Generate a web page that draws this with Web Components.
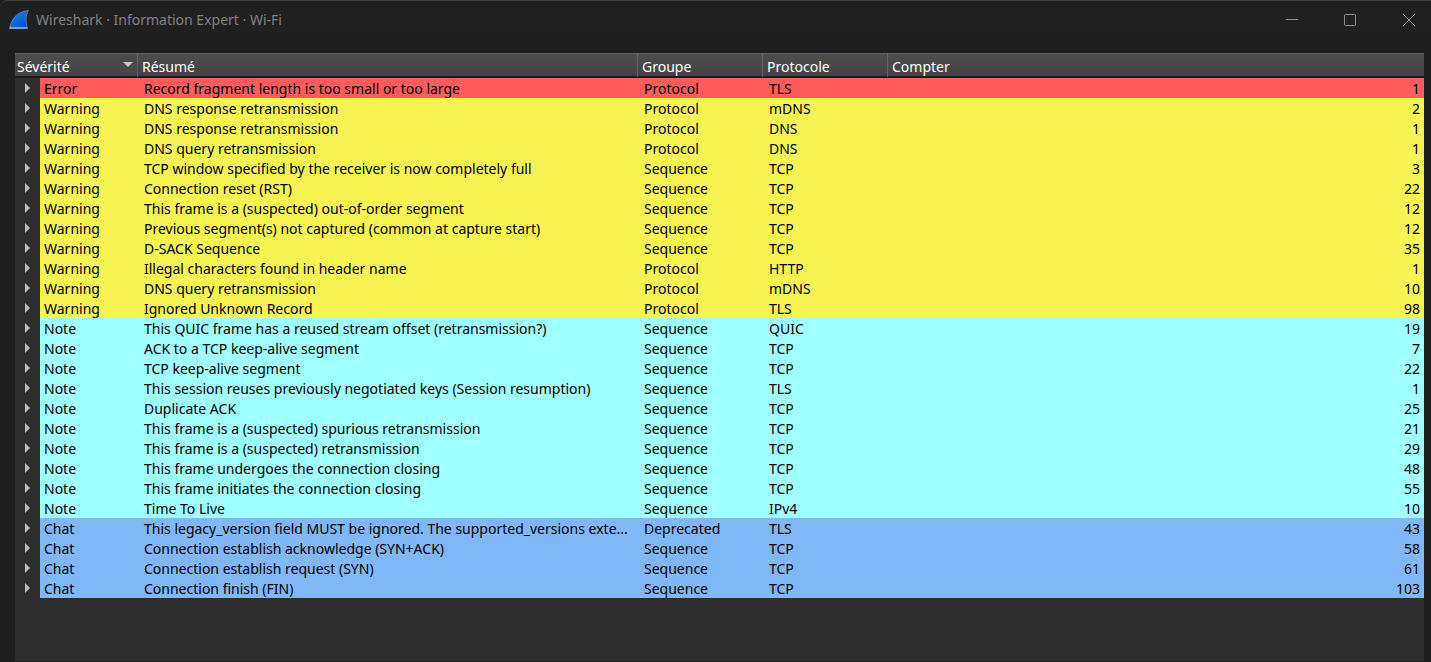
<!DOCTYPE html>
<html lang="fr">
<head>
<meta charset="utf-8">
<title>Wireshark · Information Expert · Wi-Fi</title>
<style>
  html, body { height: 100%; margin: 0; }
  body { background: #1e1e1e; font: 14px/18px "Noto Sans", "Open Sans", sans-serif; }
</style>
</head>
<body>
<app-window>
  <title-bar slot="title">Wireshark · Information Expert · Wi-Fi</title-bar>
  <expert-table></expert-table>
</app-window>

<template id="app-window">
  <style>
    :host { display: flex; flex-direction: column; box-sizing: border-box; min-height: 100vh;
      background: #1e1e1e; border-top: 1px solid #404040; border-radius: 8px 0 0 0; }
    main { flex: 1; display: flex; flex-direction: column; margin: 15px 7px 0 15px;
      background: #2d2d2d; border-bottom: 1px solid #252525; }
  </style>
  <slot name="title"></slot>
  <main><slot></slot></main>
</template>

<template id="title-bar">
  <style>
    :host { display: flex; align-items: center; height: 37px; padding-left: 8px; color: #808080;
      background: #202020; border-radius: 8px 0 0 0; }
    .logo { width: 22px; height: 22px; margin-right: 6px; }
    h1 { flex: 1; margin: 0; font: inherit; }
    button { display: grid; place-items: center; width: 58px; height: 36px; padding: 0; border: 0;
      background: none; color: #8f8f8f; }
    button:last-child { width: 60px; margin-right: -8px; }
    button svg { width: 12px; height: 12px; fill: none; stroke: currentColor; }
  </style>
  <svg class="logo" viewBox="0 0 22 22" aria-hidden="true">
    <defs><linearGradient id="fin" x1="0" y1="0" x2="0.8" y2="1">
      <stop offset="0" stop-color="#1c8df5"/><stop offset="1" stop-color="#0648cb"/>
    </linearGradient></defs>
    <path d="M1.5 19.6C3.5 10.5 8 2.6 20.5 1.6C17.4 6.5 17.4 13 19.6 19.6Z" fill="url(#fin)" stroke="#7890a8" stroke-width="0.7"/>
    <path d="M1.8 18.9H19.2" stroke="#9fb8d8" stroke-width="1.3"/>
  </svg>
  <h1><slot></slot></h1>
  <button type="button" aria-label="Réduire"><svg viewBox="0 0 12 12"><path d="M0 5.5H12"/></svg></button>
  <button type="button" aria-label="Agrandir"><svg viewBox="0 0 12 12"><rect x="0.5" y="0.5" width="11" height="11" rx="1"/></svg></button>
  <button type="button" aria-label="Fermer"><svg viewBox="0 0 12 12"><path d="M0 0L12 12M12 0L0 12"/></svg></button>
</template>

<template id="expert-table">
  <style>
    :host { display: block; }
    table { width: 100%; table-layout: fixed; border-collapse: separate; border-spacing: 0; }
    .tree { width: 25px; }
    .severity { width: 98px; }
    .summary { width: 500px; }
    .short { width: 125px; }
    th { height: 25px; box-sizing: border-box; padding: 3px 4px 0; text-align: left; font-weight: 400;
      color: #fff; background: linear-gradient(#4d4d4d, #434343); border-top: 1px solid #606060;
      border-bottom: 2px solid #1b1b1b; border-right: 1px solid #646464; }
    th:first-child { padding-left: 2px; }
    th:last-child { border-right: 0; }
    .sort { display: flex; justify-content: space-between; }
    .sort svg { width: 10px; height: 5px; margin-top: 4px; fill: #c8c8c8; }
    td { box-sizing: border-box; height: 20px; padding: 2px 6px 0; color: #000; background: var(--row);
      white-space: nowrap; overflow: hidden; text-overflow: ellipsis; }
    td:first-child { padding: 0; background: none; }
    td:nth-child(2) { padding-left: 4px; }
    td:last-child { text-align: right; padding-right: 4px; }
    td button { display: grid; place-items: center; width: 25px; height: 20px; padding: 0; border: 0; background: none; }
    td svg { width: 5px; height: 10px; fill: #bcbcbc; }
    .Error { --row: #ff5c5c; }
    .Warning { --row: #f7f353; }
    .Note { --row: #a0ffff; }
    .Chat { --row: #80b7f7; }
  </style>
  <table>
    <colgroup><col class="tree"><col class="severity"><col class="summary"><col class="short"><col class="short"><col></colgroup>
    <thead><tr>
      <th colspan="2" scope="col" aria-sort="descending"><div class="sort">Sévérité<svg viewBox="0 0 10 5" aria-hidden="true"><path d="M0 0H10L5 5Z"/></svg></div></th>
      <th scope="col">Résumé</th><th scope="col">Groupe</th><th scope="col">Protocole</th><th scope="col">Compter</th>
    </tr></thead>
    <tbody></tbody>
  </table>
</template>

<script>
const ITEMS = [
  ["Error", "Record fragment length is too small or too large", "Protocol", "TLS", 1],
  ["Warning", "DNS response retransmission", "Protocol", "mDNS", 2],
  ["Warning", "DNS response retransmission", "Protocol", "DNS", 1],
  ["Warning", "DNS query retransmission", "Protocol", "DNS", 1],
  ["Warning", "TCP window specified by the receiver is now completely full", "Sequence", "TCP", 3],
  ["Warning", "Connection reset (RST)", "Sequence", "TCP", 22],
  ["Warning", "This frame is a (suspected) out-of-order segment", "Sequence", "TCP", 12],
  ["Warning", "Previous segment(s) not captured (common at capture start)", "Sequence", "TCP", 12],
  ["Warning", "D-SACK Sequence", "Sequence", "TCP", 35],
  ["Warning", "Illegal characters found in header name", "Protocol", "HTTP", 1],
  ["Warning", "DNS query retransmission", "Protocol", "mDNS", 10],
  ["Warning", "Ignored Unknown Record", "Protocol", "TLS", 98],
  ["Note", "This QUIC frame has a reused stream offset (retransmission?)", "Sequence", "QUIC", 19],
  ["Note", "ACK to a TCP keep-alive segment", "Sequence", "TCP", 7],
  ["Note", "TCP keep-alive segment", "Sequence", "TCP", 22],
  ["Note", "This session reuses previously negotiated keys (Session resumption)", "Sequence", "TLS", 1],
  ["Note", "Duplicate ACK", "Sequence", "TCP", 25],
  ["Note", "This frame is a (suspected) spurious retransmission", "Sequence", "TCP", 21],
  ["Note", "This frame is a (suspected) retransmission", "Sequence", "TCP", 29],
  ["Note", "This frame undergoes the connection closing", "Sequence", "TCP", 48],
  ["Note", "This frame initiates the connection closing", "Sequence", "TCP", 55],
  ["Note", "Time To Live", "Sequence", "IPv4", 10],
  ["Chat", "This legacy_version field MUST be ignored. The supported_versions exte...", "Deprecated", "TLS", 43],
  ["Chat", "Connection establish acknowledge (SYN+ACK)", "Sequence", "TCP", 58],
  ["Chat", "Connection establish request (SYN)", "Sequence", "TCP", 61],
  ["Chat", "Connection finish (FIN)", "Sequence", "TCP", 103],
];

class TemplateElement extends HTMLElement {
  constructor() {
    super();
    const template = document.getElementById(this.localName);
    this.attachShadow({ mode: "open" }).append(template.content.cloneNode(true));
  }
}

class AppWindow extends TemplateElement {}
class TitleBar extends TemplateElement {}

class ExpertTable extends TemplateElement {
  connectedCallback() {
    const body = this.shadowRoot.querySelector("tbody");
    body.replaceChildren();
    for (const item of ITEMS) {
      const row = body.insertRow();
      row.className = item[0];
      row.insertCell().innerHTML =
        '<button type="button" aria-label="Développer" aria-expanded="false"><svg viewBox="0 0 5 10"><path d="M0 0L5 5L0 10Z"/></svg></button>';
      for (const value of item) row.insertCell().textContent = value;
    }
  }
}

customElements.define("app-window", AppWindow);
customElements.define("title-bar", TitleBar);
customElements.define("expert-table", ExpertTable);
</script>
</body>
</html>
